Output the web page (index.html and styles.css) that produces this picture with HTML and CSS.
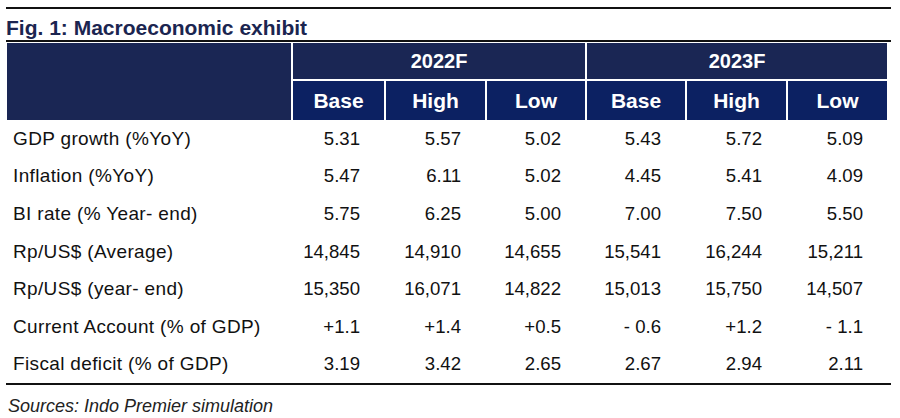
FILE: index.html
```html
<!DOCTYPE html>
<html>
<head>
<meta charset="utf-8">
<link rel="stylesheet" href="styles.css">
</head>
<body>
<div class="exhibit">
  <div class="title">Fig. 1: Macroeconomic exhibit</div>
  <div class="table">
    <div class="head">
      <div class="hcell corner"></div>
      <div class="hcell group g1">2022F</div>
      <div class="hcell group g2">2023F</div>
      <div class="hcell sub">Base</div>
      <div class="hcell sub">High</div>
      <div class="hcell sub">Low</div>
      <div class="hcell sub">Base</div>
      <div class="hcell sub">High</div>
      <div class="hcell sub">Low</div>
    </div>
    <div class="row"><div class="label">GDP growth (%YoY)</div><div class="num">5.31</div><div class="num">5.57</div><div class="num">5.02</div><div class="num">5.43</div><div class="num">5.72</div><div class="num">5.09</div></div>
    <div class="row"><div class="label">Inflation (%YoY)</div><div class="num">5.47</div><div class="num">6.11</div><div class="num">5.02</div><div class="num">4.45</div><div class="num">5.41</div><div class="num">4.09</div></div>
    <div class="row"><div class="label">BI rate (% Year- end)</div><div class="num">5.75</div><div class="num">6.25</div><div class="num">5.00</div><div class="num">7.00</div><div class="num">7.50</div><div class="num">5.50</div></div>
    <div class="row"><div class="label">Rp/US$ (Average)</div><div class="num">14,845</div><div class="num">14,910</div><div class="num">14,655</div><div class="num">15,541</div><div class="num">16,244</div><div class="num">15,211</div></div>
    <div class="row"><div class="label">Rp/US$ (year- end)</div><div class="num">15,350</div><div class="num">16,071</div><div class="num">14,822</div><div class="num">15,013</div><div class="num">15,750</div><div class="num">14,507</div></div>
    <div class="row"><div class="label">Current Account (% of GDP)</div><div class="num">+1.1</div><div class="num">+1.4</div><div class="num">+0.5</div><div class="num">- 0.6</div><div class="num">+1.2</div><div class="num">- 1.1</div></div>
    <div class="row"><div class="label">Fiscal deficit (% of GDP)</div><div class="num">3.19</div><div class="num">3.42</div><div class="num">2.65</div><div class="num">2.67</div><div class="num">2.94</div><div class="num">2.11</div></div>
  </div>
  <div class="source">Sources: Indo Premier simulation</div>
</div>
</body>
</html>
```

FILE: styles.css
```css
html, body {
  margin: 0;
  padding: 0;
  background: #ffffff;
}
body {
  font-family: "Liberation Sans", Arial, sans-serif;
  color: #111111;
}
.exhibit {
  width: 885px;
  margin: 7px 0 0 6px;
  border-top: 2px solid #111111;
  padding-top: 7px;
}
.title {
  font-size: 21px;
  font-weight: bold;
  line-height: 24px;
  color: #1b2550;
  border-bottom: 2px solid #111111;
  white-space: nowrap;
}
.table {
  border-bottom: 2px solid #111111;
}
.head {
  display: grid;
  grid-template-columns: 284px 91px 99px 98px 98px 99px 99px;
  grid-template-rows: 36px 39px;
  gap: 2px;
  width: 880px;
  margin-left: 1px;
  padding-top: 1px;
  background: #ffffff;
}
.hcell {
  display: flex;
  align-items: center;
  justify-content: center;
  color: #ffffff;
  font-weight: bold;
}
.corner {
  grid-row: 1 / 3;
  grid-column: 1;
  background: #1a2654;
}
.group {
  background: #1a2654;
  font-size: 20px;
}
.g1 { grid-column: 2 / 5; grid-row: 1; }
.g2 { grid-column: 5 / 8; grid-row: 1; }
.sub {
  grid-row: 2;
  background: #0c2162;
  font-size: 21px;
}
.row {
  display: grid;
  grid-template-columns: 284px 91px 99px 98px 98px 99px 99px;
  column-gap: 2px;
  width: 880px;
  margin-left: 1px;
  height: 37.6px;
  align-items: center;
  font-size: 19px;
}
.label {
  padding-left: 6px;
  letter-spacing: 0.35px;
  white-space: nowrap;
}
.num {
  text-align: right;
  padding-right: 24px;
  font-size: 18.6px;
}
.source {
  font-size: 18px;
  font-style: italic;
  line-height: 22px;
  padding-top: 10px;
  padding-left: 2px;
  color: #222222;
}
```
